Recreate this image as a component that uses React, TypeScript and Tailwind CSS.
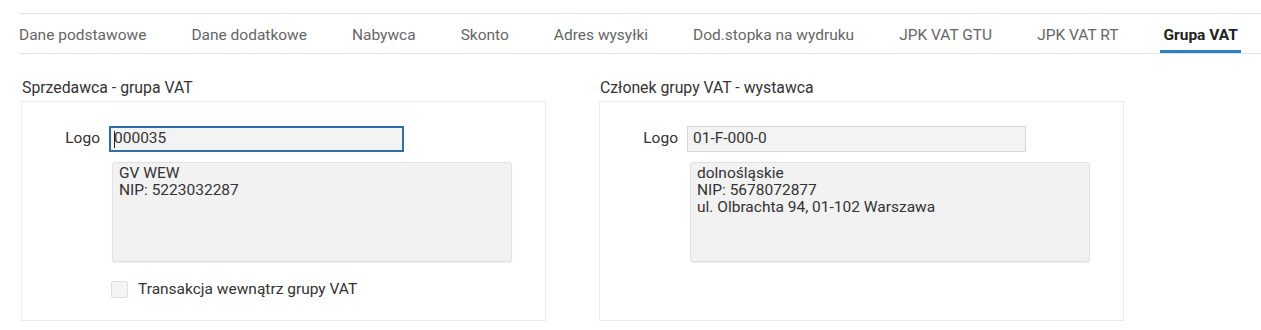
import React from 'react';

const tabs = [
  'Dane podstawowe',
  'Dane dodatkowe',
  'Nabywca',
  'Skonto',
  'Adres wysyłki',
  'Dod.stopka na wydruku',
  'JPK VAT GTU',
  'JPK VAT RT',
  'Grupa VAT',
];

const Panel: React.FC<{
  title: string;
  logo: string;
  lines: string[];
  focused?: boolean;
  inputWidth: string;
  children?: React.ReactNode;
}> = ({ title, logo, lines, focused, inputWidth, children }) => (
  <div className="w-[525px]">
    <div className="text-[15.8px] leading-[20px] text-[#333] pl-[1px] mb-[3px]">{title}</div>
    <div className="h-[220px] border border-[#ececec] pt-[24px]">
      <div className="flex items-center">
        <div className="w-[78px] text-right text-[15.5px] text-[#333]">Logo</div>
        <div
          className={
            focused
              ? `ml-[9px] h-[26px] ${inputWidth} border-2 border-[#2c6ea5] bg-[#f3f3f3] pl-[3px] flex items-center text-[15.5px] text-[#333]`
              : `ml-[9px] h-[26px] ${inputWidth} border border-[#d6d6d6] bg-[#f3f3f3] pl-[5px] flex items-center text-[15.5px] text-[#333]`
          }
        >
          {focused && <span className="w-px h-[17px] bg-[#222] -mr-[1px]" />}
          {logo}
        </div>
      </div>
      <div className="ml-[90px] mt-[10px] w-[400px] h-[100px] bg-[#f2f2f2] border border-[#e2e2e2] rounded-[3px] shadow-[0_1px_1px_rgba(0,0,0,0.08)] px-[6px] pt-[2px] text-[15.5px] leading-[17px] text-[#333]">
        {lines.map(l => (
          <div key={l}>{l}</div>
        ))}
      </div>
      {children}
    </div>
  </div>
);

export default function App() {
  return (
    <div className="w-[1261px] h-[330px] bg-white font-['Roboto',sans-serif] overflow-hidden">
      {/* Zakładki */}
      <div className="mt-[13px] ml-[19px] h-[41px] border-y border-[#e3e3e3] flex gap-[45px]">
        {tabs.map(t => {
          const active = t === 'Grupa VAT';
          return active ? (
            <div
              key={t}
              className="-mx-[3px] px-[3px] flex items-center pt-[7px] border-b-[3px] border-[#2d7fc3] text-[15.5px] font-bold text-[#222]"
            >
              {t}
            </div>
          ) : (
            <div key={t} className="flex items-center pt-[7px] pb-[3px] text-[15.5px] text-[#666]">
              {t}
            </div>
          );
        })}
      </div>

      <div className="flex gap-[53px] pl-[21px] mt-[24px]">
        <Panel
          title="Sprzedawca - grupa VAT"
          logo="000035"
          lines={['GV WEW', 'NIP: 5223032287']}
          focused
          inputWidth="w-[295px]"
        >
          <div className="flex items-center ml-[89px] mt-[16px]">
            <div className="w-[17px] h-[17px] border border-[#dedede] bg-[#f4f4f4] rounded-[2px]" />
            <span className="ml-[10px] text-[15.5px] text-[#333]">Transakcja wewnątrz grupy VAT</span>
          </div>
        </Panel>
        <Panel
          title="Członek grupy VAT - wystawca"
          logo="01-F-000-0"
          lines={['dolnośląskie', 'NIP: 5678072877', 'ul. Olbrachta 94, 01-102 Warszawa']}
          inputWidth="w-[339px]"
        />
      </div>
    </div>
  );
}
